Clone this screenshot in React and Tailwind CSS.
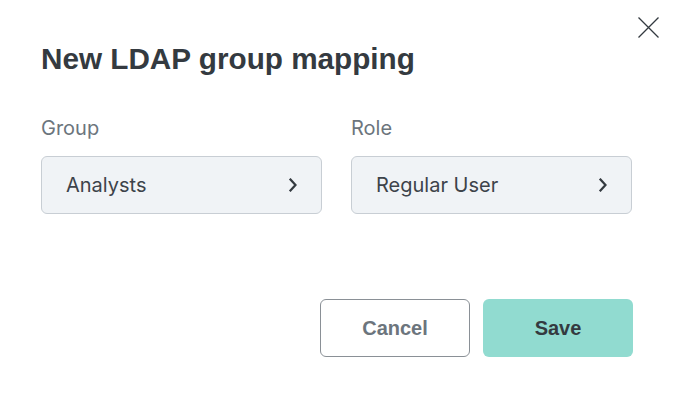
import React from "react";

function Chevron() {
  return (
    <svg width="10" height="14" viewBox="0 0 10 14" fill="none">
      <path d="M2.5 1.5 L7.5 7 L2.5 12.5" stroke="#343a40" strokeWidth="2.2" strokeLinecap="square" strokeLinejoin="miter" />
    </svg>
  );
}

function Select({ label, value }) {
  return (
    <div className="flex flex-col">
      <div className="text-[20px] leading-[24px] text-[#6c757d] font-['Inter',sans-serif] mb-[16px]">{label}</div>
      <div className="h-[58px] flex items-center justify-between rounded-[6px] border border-[#c8ced4] bg-[#f0f3f6] pl-[24px] pr-[23px]">
        <span className="text-[20px] text-[#3d434a] font-['Inter',sans-serif]">{value}</span>
        <Chevron />
      </div>
    </div>
  );
}

export default function App() {
  return (
    <div className="relative w-[673px] h-[397px] bg-white">
      <button className="absolute left-[637px] top-[16px] w-[23px] h-[23px]">
        <svg width="23" height="23" viewBox="0 0 23 23" fill="none">
          <path d="M1.5 1.5 L21.5 21.5 M21.5 1.5 L1.5 21.5" stroke="#343a40" strokeWidth="1.3" />
        </svg>
      </button>
      <div className="pl-[41px] pr-[41px] pt-[39px]">
        <h1 className="text-[29.7px] leading-[40px] font-bold text-[#343a40] font-['Liberation_Sans',Arial,sans-serif]">
          New LDAP group mapping
        </h1>
        <div className="grid grid-cols-2 gap-[29px] mt-[37px]">
          <Select label="Group" value="Analysts" />
          <Select label="Role" value="Regular User" />
        </div>
        <div className="flex justify-end gap-[13px] mt-[85px] mr-[-1px]">
          <button className="w-[150px] h-[58px] rounded-[6px] border border-[#8a9096] bg-white text-[20px] font-bold text-[#6c757d] font-['Liberation_Sans',Arial,sans-serif]">
            Cancel
          </button>
          <button className="w-[150px] h-[58px] rounded-[6px] bg-[#91dbd0] text-[20px] font-bold text-[#343a40] font-['Liberation_Sans',Arial,sans-serif]">
            Save
          </button>
        </div>
      </div>
    </div>
  );
}
